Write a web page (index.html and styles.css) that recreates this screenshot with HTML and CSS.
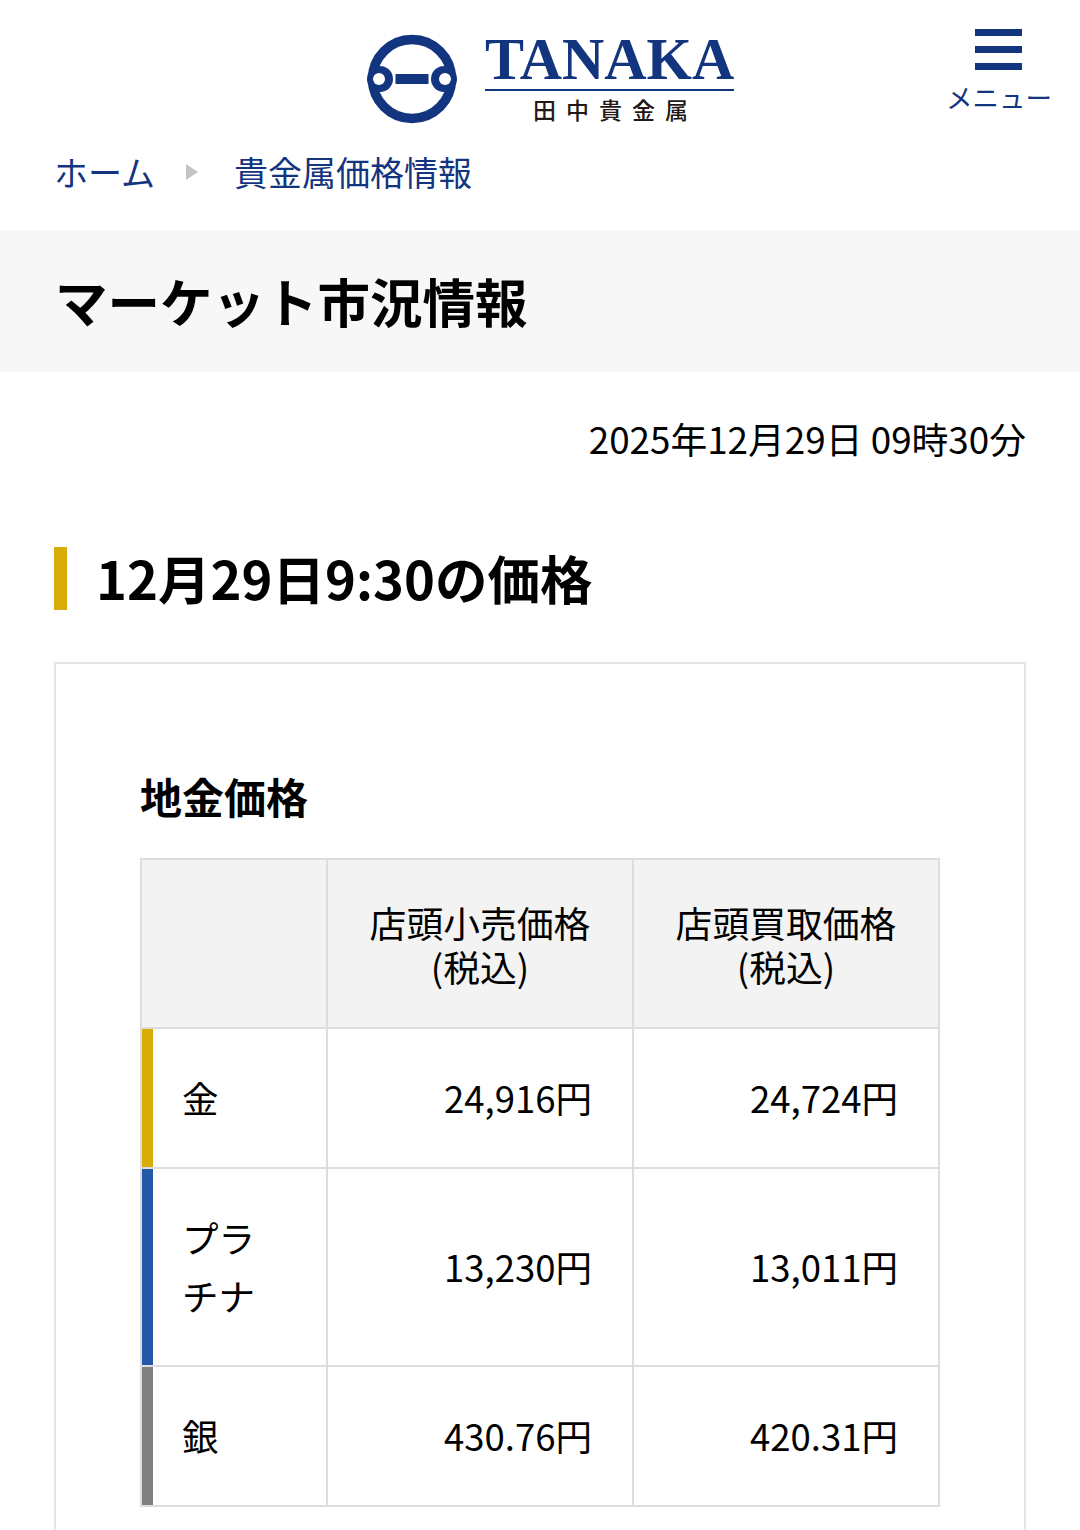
FILE: index.html
```html
<!DOCTYPE html>
<html lang="ja">
<head>
  <meta charset="UTF-8" />
  <meta name="viewport" content="width=device-width, initial-scale=1.0"/>
  <title>マーケット市況情報</title>
  <link rel="stylesheet" href="styles.css">
</head>
<body>

  <header class="site-header">
    <a class="logo" href="#">
      <svg class="logo-mark" viewBox="0 0 90 90" width="90" height="90">
        <circle cx="45" cy="45" r="39.5" fill="none" stroke="#13357f" stroke-width="9.5"/>
        <circle cx="13" cy="45" r="13" fill="#13357f"/>
        <circle cx="77" cy="45" r="13" fill="#13357f"/>
        <circle cx="12" cy="45" r="6" fill="#fff"/>
        <circle cx="78" cy="45" r="6" fill="#fff"/>
        <rect x="28.5" y="40" width="33" height="10" fill="#13357f"/>
      </svg>
      <div class="logo-text">
        <div class="logo-en">TANAKA</div>
        <div class="logo-ja">田中貴金属</div>
      </div>
    </a>
    <a class="menu-btn" href="#">
      <span class="menu-icon"><i></i><i></i><i></i></span>
      <span class="menu-label">メニュー</span>
    </a>
  </header>

  <nav class="breadcrumb">
    <a href="#">ホーム</a>
    <span class="crumb-arrow"></span>
    <a href="#">貴金属価格情報</a>
  </nav>

  <h1 class="page-title">マーケット市況情報</h1>

  <main class="content">
    <p class="updated">2025年12月29日 09時30分</p>

    <h2 class="section-title">12月29日9:30の価格</h2>

    <section class="card">
      <h3 class="card-title">地金価格</h3>
      <table class="price-table">
        <thead>
          <tr>
            <th></th>
            <th>店頭小売価格<br>(税込)</th>
            <th>店頭買取価格<br>(税込)</th>
          </tr>
        </thead>
        <tbody>
          <tr>
            <td class="metal gold">金</td>
            <td class="price">24,916円</td>
            <td class="price">24,724円</td>
          </tr>
          <tr>
            <td class="metal platinum">プラチナ</td>
            <td class="price">13,230円</td>
            <td class="price">13,011円</td>
          </tr>
          <tr>
            <td class="metal silver">銀</td>
            <td class="price">430.76円</td>
            <td class="price">420.31円</td>
          </tr>
        </tbody>
      </table>
    </section>
  </main>

</body>
</html>
```

FILE: styles.css
```css
* { box-sizing: border-box; }

html, body {
  height: 1530px;
  overflow: hidden;
}

body {
  margin: 0;
  background: #fff;
  color: #000;
  font-family: "Noto Sans CJK JP", "Noto Sans", sans-serif;
  font-size: 36.8px;
}

a {
  color: #13357f;
  text-decoration: none;
}

.site-header {
  display: flex;
  align-items: flex-start;
  height: 142px;
  padding-left: 367px;
}

.logo {
  display: flex;
  gap: 28px;
  margin-top: 34px;
  height: 90px;
}

.logo-mark {
  flex: none;
}

.logo-text {
  width: 249px;
}

.logo-en {
  font-family: "Liberation Serif", serif;
  font-weight: bold;
  font-size: 58.5px;
  line-height: 52px;
  height: 57px;
  border-bottom: 2px solid #13357f;
  white-space: nowrap;
}

.logo-ja {
  margin-top: 3px;
  padding-left: 12px;
  font-size: 23px;
  line-height: 30px;
  letter-spacing: 10px;
  text-align: center;
  color: #231815;
  font-weight: 500;
}

.menu-btn {
  display: flex;
  flex-direction: column;
  align-items: center;
  margin-left: auto;
  margin-right: 28px;
  margin-top: 29px;
}

.menu-icon {
  display: flex;
  flex-direction: column;
  gap: 10px;
  width: 47px;
  margin-right: 2px;
}

.menu-icon i {
  height: 7px;
  background: #13357f;
}

.menu-label {
  margin-top: 10px;
  font-size: 26.5px;
  line-height: 34px;
  white-space: nowrap;
}

.breadcrumb {
  display: flex;
  align-items: center;
  height: 60px;
  padding-left: 54px;
  font-size: 34px;
  line-height: 60px;
  margin-bottom: 28px;
}

.crumb-arrow {
  width: 0;
  height: 0;
  margin: 0 36px 0 31px;
  border-left: 12px solid #c4c4c4;
  border-top: 8px solid transparent;
  border-bottom: 8px solid transparent;
}

.page-title {
  margin: 0;
  height: 142px;
  padding-left: 55px;
  background: #f7f7f7;
  font-size: 52.5px;
  font-weight: 700;
  line-height: 141px;
}

.content {
  padding: 0 54px;
}

.updated {
  margin: 38px 0 0;
  line-height: 56px;
  text-align: right;
}

.section-title {
  margin: 81px 0 0;
  height: 63px;
  padding-left: 29px;
  border-left: 13px solid #d9ac07;
  font-size: 52.5px;
  font-weight: 700;
  line-height: 60px;
}

.card {
  margin-top: 52px;
  padding: 97px 84px 90px;
  border: 2px solid #e5e5e5;
}

.card-title {
  margin: 0 0 27px;
  font-size: 42px;
  font-weight: 700;
  line-height: 70px;
}

.price-table {
  width: 800px;
  table-layout: fixed;
  border-collapse: collapse;
  border: 2px solid #ddd;
}

.price-table th {
  padding: 40px 40px 39px;
  border: 2px solid #ddd;
  background: #f3f3f3;
  font-weight: 400;
  line-height: 44px;
}

.price-table th:first-child {
  width: 186px;
}

.price-table td {
  padding: 40px 40px 40px 40px;
  border: 2px solid #ddd;
  font-size: 36.5px;
  line-height: 58px;
}

.metal.gold { box-shadow: inset 11px 0 0 #d9ac07; }
.metal.platinum { box-shadow: inset 11px 0 0 #2359a8; }
.metal.silver { box-shadow: inset 11px 0 0 #808080; }

.price-table .price {
  text-align: right;
}
```
